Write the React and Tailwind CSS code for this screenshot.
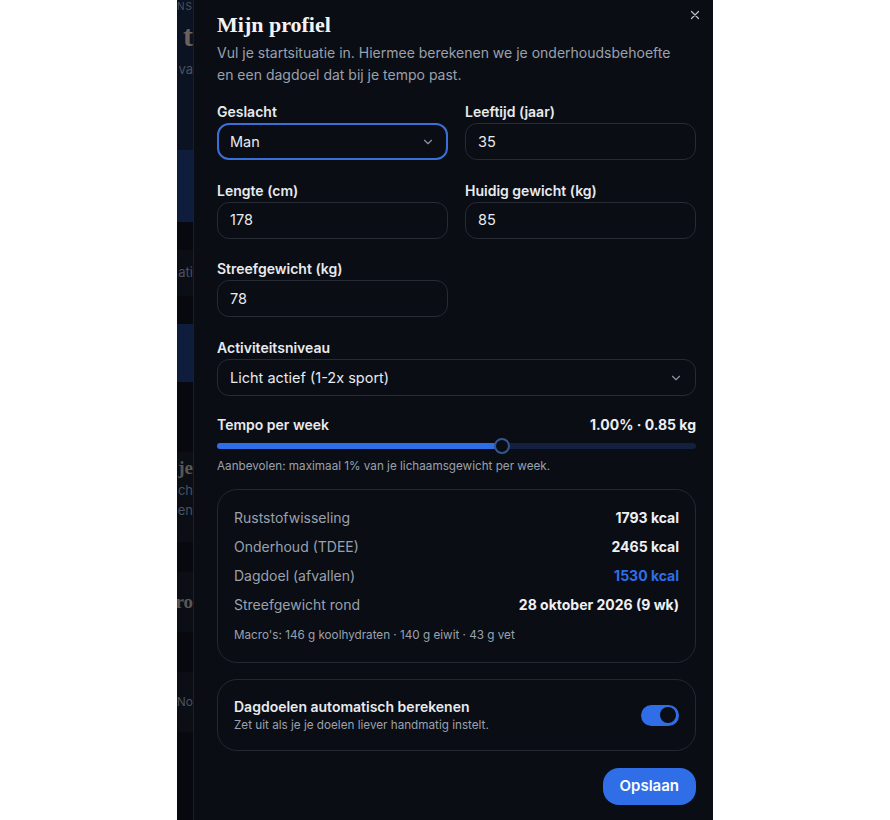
import React from 'react'

const font = { fontFamily: 'Inter, "Noto Sans", sans-serif' }

function Chevron() {
  return (
    <svg width="14" height="14" viewBox="0 0 24 24" fill="none" stroke="#8b93a3" strokeWidth="2" strokeLinecap="round" strokeLinejoin="round">
      <path d="m6 9 6 6 6-6" />
    </svg>
  )
}

function Field({ label, value, select, focus }) {
  return (
    <div className="flex flex-col">
      <label className="text-[14px] font-semibold text-[#e8eaee] leading-[18px] mb-[2px]">{label}</label>
      <div className={`h-[37px] rounded-xl border flex items-center justify-between px-3 bg-[#0a0d14] ${focus ? 'border-[#3a6fd8] border-2 px-[11px]' : 'border-[#262b36]'}`}>
        <span className="text-[14.5px] text-[#e8eaee]">{value}</span>
        {select && <Chevron />}
      </div>
    </div>
  )
}

function Row({ label, value, blue }) {
  return (
    <div className="flex items-center justify-between h-[29px]">
      <span className="text-[14px] text-[#9aa1ad]">{label}</span>
      <span className={`text-[14px] font-bold ${blue ? 'text-[#2f6ee6]' : 'text-[#eef0f3]'}`}>{value}</span>
    </div>
  )
}

function BackgroundStrip() {
  return (
    <div className="w-4 shrink-0 overflow-hidden flex flex-col bg-[#07090f]">
      <div className="h-[150px] bg-[#0b1222] flex flex-col items-end">
        <span className="text-[10px] text-[#4a5160] whitespace-nowrap leading-3 tracking-widest">NS</span>
        <span className="text-[30px] font-bold text-[#6b6259] whitespace-nowrap leading-8 mt-[8px]" style={{ fontFamily: '"Liberation Serif", serif' }}>t</span>
        <span className="text-[13px] text-[#4a5160] whitespace-nowrap mt-[8px]">va</span>
      </div>
      <div className="h-[72px] bg-[#0f1d3d]" />
      <div className="h-[28px] bg-[#07090f]" />
      <div className="h-[46px] bg-[#0b0e15] flex items-center justify-end">
        <span className="text-[13px] text-[#4a5160] whitespace-nowrap">ati</span>
      </div>
      <div className="h-[28px] bg-[#07090f]" />
      <div className="h-[58px] bg-[#0f1d3d]" />
      <div className="h-[70px] bg-[#07090f]" />
      <div className="h-[90px] bg-[#0b0e15] flex flex-col items-end pt-[4px]">
        <span className="text-[19px] font-bold text-[#5c5752] whitespace-nowrap leading-6" style={{ fontFamily: '"Liberation Serif", serif' }}>je</span>
        <span className="text-[13px] text-[#4a5160] whitespace-nowrap leading-5">ch</span>
        <span className="text-[13px] text-[#4a5160] whitespace-nowrap leading-5">en</span>
      </div>
      <div className="h-[30px] bg-[#07090f]" />
      <div className="h-[60px] bg-[#0b0e15] flex items-center justify-end">
        <span className="text-[19px] font-bold text-[#5c5752] whitespace-nowrap" style={{ fontFamily: '"Liberation Serif", serif' }}>ro</span>
      </div>
      <div className="h-[40px] bg-[#07090f]" />
      <div className="h-[60px] bg-[#0b0e15] flex items-center justify-end">
        <span className="text-[12px] text-[#4a5160] whitespace-nowrap">No</span>
      </div>
      <div className="flex-1 bg-[#07090f]" />
    </div>
  )
}

export default function App() {
  return (
    <div className="w-[890px] h-[820px] bg-white flex" style={font}>
      <div className="w-[177px] shrink-0" />
      <div className="w-[536px] h-[820px] flex overflow-hidden">
        <BackgroundStrip />
        <div className="flex-1 bg-[#0a0d14] border-l border-[#1a1f2a] pl-[23px] pr-[17px] pt-[11px] relative">
          <button className="absolute right-[11px] top-[8px] text-[#b8bdc7]">
            <svg width="14" height="14" viewBox="0 0 24 24" fill="none" stroke="currentColor" strokeWidth="2.2" strokeLinecap="round">
              <path d="M18 6 6 18M6 6l12 12" />
            </svg>
          </button>

          <h2 className="text-[22px] font-bold text-[#f2f3f5] leading-7" style={{ fontFamily: '"Liberation Serif", serif' }}>Mijn profiel</h2>
          <p className="text-[14px] text-[#9aa1ad] leading-[22px] mt-[3px] max-w-[470px]">
            Vul je startsituatie in. Hiermee berekenen we je onderhoudsbehoefte en een dagdoel dat bij je tempo past.
          </p>

          <div className="grid grid-cols-2 gap-x-[17px] gap-y-[21.7px] mt-[17px]">
            <Field label="Geslacht" value="Man" select focus />
            <Field label="Leeftijd (jaar)" value="35" />
            <Field label="Lengte (cm)" value="178" />
            <Field label="Huidig gewicht (kg)" value="85" />
            <Field label="Streefgewicht (kg)" value="78" />
            <div />
            <div className="col-span-2">
              <Field label="Activiteitsniveau" value="Licht actief (1-2x sport)" select />
            </div>
          </div>

          <div className="mt-[20px]">
            <div className="flex items-center justify-between leading-[18px]">
              <span className="text-[14px] font-semibold text-[#e8eaee]">Tempo per week</span>
              <span className="text-[14px] font-bold text-[#eef0f3]">1.00% · 0.85 kg</span>
            </div>
            <div className="relative h-4 mt-[4px] flex items-center">
              <div className="w-full h-[6px] rounded-full bg-[#13203f] flex">
                <div className="h-full w-[59.5%] rounded-full bg-[#2f6ee6]" />
              </div>
              <div className="absolute left-[59.5%] -translate-x-1/2 w-4 h-4 rounded-full bg-[#0a0d14] border-2 border-[#34568f]" />
            </div>
            <p className="text-[11.7px] leading-4 text-[#9aa1ad] mt-[4px]">Aanbevolen: maximaal 1% van je lichaamsgewicht per week.</p>
          </div>

          <div className="mt-[15px] rounded-[20px] border border-[#232833] px-[16px] pt-[13px] pb-[19px]">
            <Row label="Ruststofwisseling" value="1793 kcal" />
            <Row label="Onderhoud (TDEE)" value="2465 kcal" />
            <Row label="Dagdoel (afvallen)" value="1530 kcal" blue />
            <Row label="Streefgewicht rond" value="28 oktober 2026 (9 wk)" />
            <p className="text-[11.7px] leading-4 text-[#9aa1ad] mt-[8px]">Macro's: 146 g koolhydraten · 140 g eiwit · 43 g vet</p>
          </div>

          <div className="mt-[16px] rounded-[20px] border border-[#232833] px-[16px] h-[72px] flex items-center justify-between">
            <div>
              <div className="text-[14px] font-semibold text-[#e8eaee] leading-5">Dagdoelen automatisch berekenen</div>
              <div className="text-[11.7px] text-[#9aa1ad] leading-4">Zet uit als je je doelen liever handmatig instelt.</div>
            </div>
            <div className="w-[38px] h-[21px] rounded-full bg-[#2f6ee6] flex items-center justify-end px-[3px]">
              <div className="w-[16px] h-[16px] rounded-full bg-[#0a0d14]" />
            </div>
          </div>

          <div className="flex justify-end mt-[17px]">
            <button className="h-[37px] px-[17px] rounded-2xl bg-[#2f6ee6] text-white text-[15px] font-semibold">Opslaan</button>
          </div>
        </div>
      </div>
    </div>
  )
}
